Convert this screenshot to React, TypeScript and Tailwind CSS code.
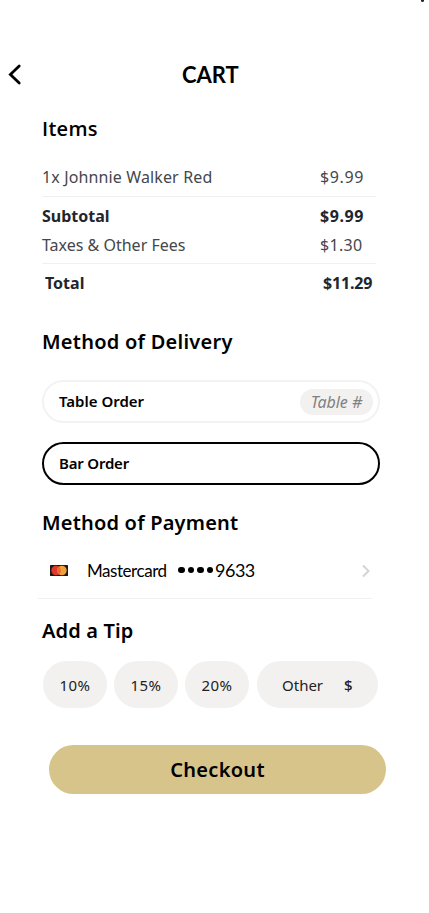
import { useState } from 'react'

const TIPS = ['10%', '15%', '20%']

function MastercardIcon() {
  return (
    <svg width="18" height="11" viewBox="0 0 18 11">
      <rect width="18" height="11" rx="0.5" fill="#1d1718" />
      <circle cx="6.1" cy="5.5" r="4.8" fill="#dc3a2c" />
      <circle cx="11.9" cy="5.5" r="4.8" fill="#efa03a" />
      <path d="M9 1.7a4.8 4.8 0 0 1 0 7.6a4.8 4.8 0 0 1 0-7.6z" fill="#ed6a2d" />
    </svg>
  )
}

function Chevron() {
  return (
    <svg width="8" height="14" viewBox="0 0 8 14" fill="none" stroke="#d4d4d4" strokeWidth="2">
      <path d="M1 1.5l5.5 5.5L1 12.5" />
    </svg>
  )
}

export default function App() {
  const [delivery, setDelivery] = useState<'table' | 'bar'>('bar')

  const border = (kind: 'table' | 'bar') =>
    delivery === kind ? 'border-black' : 'border-[#f3f3f3]'

  return (
    <div className="relative h-[913px] w-[429px] overflow-hidden bg-white font-['Noto_Sans',sans-serif] text-black">
      <div className="absolute -top-px right-[5px] h-[3px] w-[3px] rounded-full bg-[#222]" />

      <header className="flex h-[90px] items-end pl-[8px]">
        <button className="mb-[5px] block">
          <svg width="14" height="21" viewBox="0 0 14 21" fill="none" stroke="black" strokeWidth="2.8" strokeLinecap="round">
            <path d="M11.2 2L2.4 10.5l8.8 8.5" />
          </svg>
        </button>
        <h1 className="ml-[160px] font-['Lato',sans-serif] text-[22px] leading-[30px] font-bold">CART</h1>
      </header>

      <main className="pl-[42px]">
        <h2 className="mt-[24px] font-['Open_Sans',sans-serif] text-[20px] leading-[30px] font-semibold tracking-[0.3px]">Items</h2>

        <section className="mt-[18px] w-[334px] text-[16px] leading-[30px] text-[#44474b]">
          <div className="flex h-[35px] border-b-[1.5px] border-[#f0f0f0]">
            <span className="w-[278px] tracking-[0.13px]">1x Johnnie Walker Red</span>
            <span className="tracking-[0.65px]">$9.99</span>
          </div>
          <div className="mt-[4px] flex h-[29px] font-bold text-[#22262b]">
            <span className="w-[278px]">Subtotal</span>
            <span className="tracking-[0.6px]">$9.99</span>
          </div>
          <div className="flex h-[34px] border-b-[1.5px] border-[#f0f0f0]">
            <span className="w-[278px]">Taxes &amp; Other Fees</span>
            <span className="tracking-[0.3px]">$1.30</span>
          </div>
          <div className="mt-[4px] flex h-[30px] pl-[3px] font-bold text-[#22262b]">
            <span className="w-[278px]">Total</span>
            <span className="tracking-[-0.15px]">$11.29</span>
          </div>
        </section>

        <h2 className="mt-[29px] text-[20px] leading-[30px] font-semibold tracking-[0.25px]">Method of Delivery</h2>
        <section className="mt-[23px] flex w-[338px] flex-col gap-[19px] text-[15px] font-semibold">
          <button
            onClick={() => setDelivery('table')}
            className={`flex h-[43px] items-center justify-between rounded-full border-2 pr-[5px] pl-[15px] ${border('table')}`}
          >
            Table Order
            <span className="flex h-[26px] w-[73px] items-center justify-center rounded-full bg-[#f2f1f0] text-[16px] font-normal text-[#818181] italic">
              Table #
            </span>
          </button>
          <button
            onClick={() => setDelivery('bar')}
            className={`flex h-[43px] items-center rounded-full border-2 pl-[15px] tracking-[-0.2px] ${border('bar')}`}
          >
            Bar Order
          </button>
        </section>

        <h2 className="mt-[23px] text-[20px] leading-[30px] font-semibold tracking-[0.2px]">Method of Payment</h2>
        <button className="mt-[18px] -ml-[4px] flex h-[43px] w-[334px] items-start border-b-[1.5px] border-[#f0f0f0] pl-[12px] font-['Lato',sans-serif] text-[18px] leading-[29px]">
          <span className="flex h-[29px] w-[37px] items-center">
            <MastercardIcon />
          </span>
          <span className="w-[91px] text-left text-[17px] tracking-[-0.45px]">Mastercard</span>
          <span className="flex h-[28px] w-[37px] items-center gap-[3px]">
            {[0, 1, 2, 3].map((i) => (
              <i key={i} className="h-[6.5px] w-[6.5px] rounded-full bg-black" />
            ))}
          </span>
          <span className="tracking-[-0.5px]">9633</span>
          <span className="mr-[2px] ml-auto flex h-[29px] items-center">
            <Chevron />
          </span>
        </button>

        <h2 className="mt-[17px] text-[20px] leading-[30px] font-semibold tracking-[0.15px]">Add a Tip</h2>
        <div className="mt-[15px] ml-[1px] flex gap-[7px] text-[15px] text-[#222]">
          {TIPS.map((tip) => (
            <button key={tip} className="h-[47px] w-[64px] rounded-full bg-[#f2f1f0] pt-px tracking-[0.4px]">
              {tip}
            </button>
          ))}
          <button className="ml-px flex h-[47px] w-[121px] items-center rounded-full bg-[#f2f1f0] pt-px pl-[25px]">
            <span className="w-[62px] text-left">Other</span>
            <span className="font-medium">$</span>
          </button>
        </div>

        <button className="mt-[37px] ml-[7px] block h-[49px] w-[337px] rounded-full bg-[#d6c48b] text-[20px] font-semibold tracking-[0.3px]">
          Checkout
        </button>
      </main>
    </div>
  )
}
